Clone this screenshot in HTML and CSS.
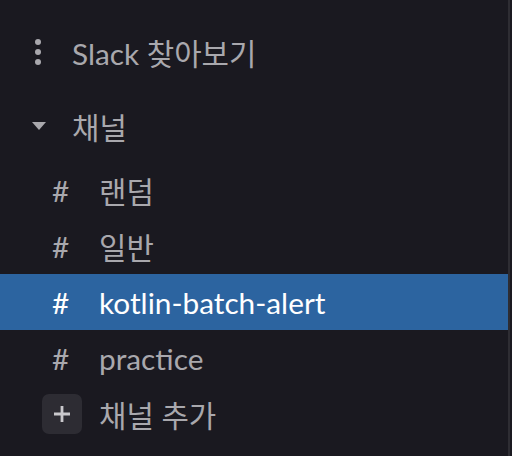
FILE: index.html
```html
<!DOCTYPE html>
<html lang="ko">
<head>
<meta charset="utf-8">
<link rel="stylesheet" href="styles.css">
</head>
<body>
<nav class="sidebar">
  <div class="row browse">
    <span class="icon-slot dots-slot">
      <svg width="8" height="28" viewBox="0 0 8 28"><circle cx="4" cy="4" r="3"/><circle cx="4" cy="14" r="3"/><circle cx="4" cy="24" r="3"/></svg>
    </span>
    <span class="label">Slack 찾아보기</span>
  </div>
  <div class="row section">
    <span class="icon-slot caret-slot">
      <svg width="16" height="10" viewBox="0 0 16 10"><path d="M1 1 H15 L8 9 Z"/></svg>
    </span>
    <span class="label">채널</span>
  </div>
  <ul class="channels">
    <li class="row channel"><span class="hash">#</span><span class="label">랜덤</span></li>
    <li class="row channel"><span class="hash">#</span><span class="label">일반</span></li>
    <li class="row channel active"><span class="hash">#</span><span class="label">kotlin-batch-alert</span></li>
    <li class="row channel"><span class="hash">#</span><span class="label">practice</span></li>
    <li class="row add">
      <span class="plus-box">
        <svg width="18" height="18" viewBox="0 0 18 18"><path d="M9 1 V17 M1 9 H17" stroke-width="2.8"/></svg>
      </span>
      <span class="label">채널 추가</span>
    </li>
  </ul>
</nav>
</body>
</html>
```

FILE: styles.css
```css
html, body {
  margin: 0;
  padding: 0;
  background: #1a1920;
}
.sidebar {
  width: 510px;
  height: 456px;
  box-sizing: border-box;
  border-right: 2px solid #2e2d33;
  background: #1a1920;
  font-family: Lato, "Noto Sans CJK KR", sans-serif;
  font-size: 29.8px;
  color: #a9a8ad;
  padding-top: 24px;
}
.row {
  display: flex;
  align-items: center;
  height: 56px;
  box-sizing: border-box;
}
.label {
  white-space: nowrap;
}
.icon-slot {
  display: flex;
  align-items: center;
}
.browse {
  padding-left: 34px;
}
.dots-slot {
  width: 38px;
}
.dots-slot svg {
  fill: #a9a8ad;
}
.section {
  margin-top: 18px;
  padding-left: 31px;
}
.caret-slot {
  width: 41px;
}
.caret-slot svg {
  fill: #a9a8ad;
}
.channels {
  list-style: none;
  margin: 8px 0 0;
  padding: 0;
}
.channel {
  padding-left: 52px;
}
.hash {
  width: 47px;
}
.channel.active {
  background: #2c64a0;
  color: #ffffff;
}
.add {
  padding-left: 42px;
}
.plus-box {
  width: 40px;
  height: 40px;
  border-radius: 7px;
  background: #2d2c33;
  display: flex;
  align-items: center;
  justify-content: center;
  margin-right: 17px;
}
.plus-box svg {
  stroke: #c9c8cc;
  fill: none;
}
```
